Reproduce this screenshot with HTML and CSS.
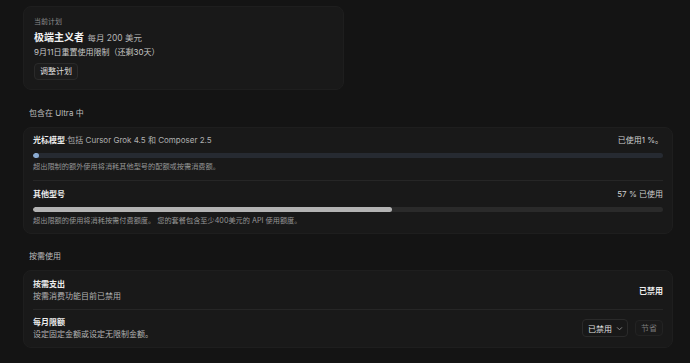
FILE: index.html
```html
<!DOCTYPE html>
<html lang="zh-CN">
<head>
  <meta charset="UTF-8" />
  <meta name="viewport" content="width=device-width, initial-scale=1.0"/>
  <title>使用情况</title>
  <link rel="stylesheet" href="styles.css">
</head>
<body>
  <div class="page">

    <div class="plan-card">
      <div class="plan-label">当前计划</div>
      <div class="plan-title">极端主义者 <span class="plan-price">每月 200 美元</span></div>
      <div class="plan-reset">9月11日重置使用限制（还剩30天）</div>
      <button class="btn">调整计划</button>
    </div>

    <div class="section-label">包含在 Ultra 中</div>
    <div class="card">
      <div class="usage-row">
        <div class="row-head">
          <span class="row-title">光标模型<span class="row-muted">·包括 Cursor Grok 4.5 和 Composer 2.5</span></span>
          <span class="row-value">已使用1 %。</span>
        </div>
        <div class="bar bar-blue"><div class="bar-fill" style="width: 1%"></div></div>
        <div class="row-desc">超出限制的额外使用将消耗其他型号的配额或按需消费额。</div>
      </div>
      <div class="usage-row">
        <div class="row-head">
          <span class="row-title">其他型号</span>
          <span class="row-value">57 % 已使用</span>
        </div>
        <div class="bar"><div class="bar-fill" style="width: 57%"></div></div>
        <div class="row-desc">超出限额的使用将消耗按需付费额度。 您的套餐包含至少400美元的 API 使用额度。</div>
      </div>
    </div>

    <div class="section-label">按需使用</div>
    <div class="card">
      <div class="setting-row">
        <div>
          <div class="row-title">按需支出</div>
          <div class="row-sub">按需消费功能目前已禁用</div>
        </div>
        <span class="row-value strong">已禁用</span>
      </div>
      <div class="setting-row">
        <div>
          <div class="row-title">每月限额</div>
          <div class="row-sub">设定固定金额或设定无限制金额。</div>
        </div>
        <div class="controls">
          <button class="select">已禁用
            <svg width="7" height="7" viewBox="0 0 8 8"><path d="M1.5 3 L4 5.5 L6.5 3" fill="none" stroke="#8a8a8a" stroke-width="1.1" stroke-linecap="round" stroke-linejoin="round"/></svg>
          </button>
          <button class="btn btn-dim">节省</button>
        </div>
      </div>
    </div>

  </div>
</body>
</html>
```

FILE: styles.css
```css
body {
  margin: 0;
  background: #141414;
  color: #e6e6e6;
  font-family: Inter, "Noto Sans CJK SC", sans-serif;
}

.page {
  width: 650px;
  padding: 6px 0 0 23px;
}

.plan-card {
  width: 321px;
  box-sizing: border-box;
  height: 84px;
  padding: 10px 10px 0;
  background: #191919;
  border: 1px solid #1e1e1e;
  border-radius: 8px;
}

.plan-label {
  font-size: 7px;
  color: #8c8c8c;
  line-height: 9px;
}

.plan-title {
  margin-top: 4px;
  font-size: 10px;
  font-weight: 700;
  color: #f2f2f2;
  line-height: 14px;
}

.plan-price {
  font-size: 8.5px;
  font-weight: 400;
  color: #b4b4b4;
  margin-left: 1px;
}

.plan-reset {
  margin-top: 1px;
  font-size: 8px;
  color: #c8c8c8;
  line-height: 12px;
}

.btn {
  margin-top: 5px;
  height: 17px;
  padding: 0 5px;
  font-family: inherit;
  font-size: 8px;
  color: #dcdcdc;
  background: #1c1c1c;
  border: 1px solid #2a2a2a;
  border-radius: 4px;
  line-height: 15px;
}

.section-label {
  margin: 17px 0 0 6px;
  font-size: 8px;
  color: #bdbdbd;
  line-height: 12px;
  height: 12px;
}

.section-label + .card + .section-label {
  margin-top: 16px;
}

.card {
  margin-top: 8px;
  background: #191919;
  border: 1px solid #1e1e1e;
  border-radius: 8px;
  padding: 0 9px;
}

.usage-row {
  padding: 6px 0 8px;
}

.usage-row + .usage-row {
  padding: 7px 0 7px;
}

.usage-row + .usage-row,
.setting-row + .setting-row {
  border-top: 1px solid #262626;
}

.row-head {
  display: flex;
  justify-content: space-between;
  align-items: center;
  line-height: 12px;
}

.row-title {
  font-size: 8px;
  font-weight: 600;
  color: #ececec;
}

.row-muted {
  font-weight: 400;
  color: #b0b0b0;
}

.row-value {
  font-size: 8px;
  color: #cfcfcf;
}

.row-value.strong {
  font-weight: 600;
  color: #ececec;
}

.bar {
  margin-top: 7px;
  height: 5px;
  border-radius: 3px;
  background: #2a2a2a;
  overflow: hidden;
}

.bar-fill {
  height: 100%;
  border-radius: 3px;
  background: #b3b3b3;
}

.bar-blue {
  background: #262a31;
}

.bar-blue .bar-fill {
  min-width: 6px;
  background: #8aaad0;
}

.row-desc {
  margin-top: 4px;
  font-size: 7.2px;
  color: #979797;
  line-height: 10px;
}

.setting-row {
  display: flex;
  justify-content: space-between;
  align-items: center;
  padding: 7px 0;
}

.setting-row + .setting-row {
  padding-top: 6px;
}

.row-sub {
  margin-top: 1px;
  font-size: 8px;
  color: #b3b3b3;
  line-height: 12px;
}

.controls {
  display: flex;
  gap: 7px;
  align-items: center;
}

.select {
  display: flex;
  align-items: center;
  gap: 4px;
  height: 18px;
  padding: 0 4px 0 5px;
  font-family: inherit;
  font-size: 8px;
  color: #e0e0e0;
  background: #181818;
  border: 1px solid #2a2a2a;
  border-radius: 4px;
}

.btn-dim {
  margin-top: 0;
  height: 16px;
  color: #787878;
  background: #1a1a1a;
  border-color: #232323;
}
```
